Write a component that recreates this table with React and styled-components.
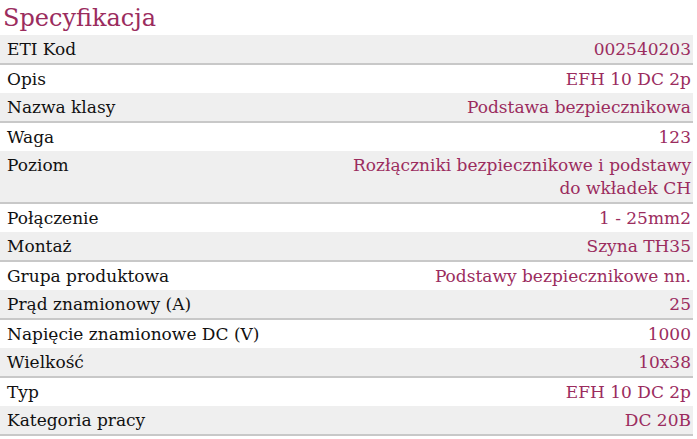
import React from 'react'
import styled, { createGlobalStyle } from 'styled-components'

const Global = createGlobalStyle`
  body {
    margin: 0;
    background: #ffffff;
    font-family: "DejaVu Serif", serif;
  }
`

const Wrap = styled.div`
  width: 693px;
`

const Title = styled.h2`
  margin: 0;
  padding: 3px 0 0 3px;
  height: 35px;
  box-sizing: border-box;
  font-family: "DejaVu Serif", serif;
  font-size: 24px;
  font-weight: normal;
  line-height: 30px;
  color: #9b2c5e;
`

const Table = styled.div`
  display: flex;
  flex-direction: column;
`

const Row = styled.div`
  display: flex;
  justify-content: space-between;
  align-items: flex-start;
  padding: 3px 2px 2px 7px;
  font-family: "DejaVu Serif", serif;
  font-size: 17px;
  line-height: 23px;
  background: ${(p) => (p.$odd ? '#efefef' : '#ffffff')};
  border-bottom: ${(p) => (p.$odd ? '2px solid #c8c8c8' : 'none')};
`

const Label = styled.span`
  font-family: "DejaVu Serif", serif;
  color: #111111;
`

const Value = styled.span`
  font-family: "DejaVu Serif", serif;
  color: #9b2c5e;
  text-align: right;
`

const dane = [
  ['ETI Kod', '002540203'],
  ['Opis', 'EFH 10 DC 2p'],
  ['Nazwa klasy', 'Podstawa bezpiecznikowa'],
  ['Waga', '123'],
  ['Poziom', ['Rozłączniki bezpiecznikowe i podstawy', 'do wkładek CH']],
  ['Połączenie', '1 - 25mm2'],
  ['Montaż', 'Szyna TH35'],
  ['Grupa produktowa', 'Podstawy bezpiecznikowe nn.'],
  ['Prąd znamionowy (A)', '25'],
  ['Napięcie znamionowe DC (V)', '1000'],
  ['Wielkość', '10x38'],
  ['Typ', 'EFH 10 DC 2p'],
  ['Kategoria pracy', 'DC 20B'],
]

export default function App() {
  return (
    <Wrap>
      <Global />
      <Title>Specyfikacja</Title>
      <Table>
        {dane.map(([nazwa, wartosc], i) => (
          <Row key={nazwa} $odd={i % 2 === 0}>
            <Label>{nazwa}</Label>
            <Value>
              {Array.isArray(wartosc)
                ? wartosc.map((l, j) => (
                    <React.Fragment key={j}>
                      {l}
                      {j < wartosc.length - 1 && <br />}
                    </React.Fragment>
                  ))
                : wartosc}
            </Value>
          </Row>
        ))}
      </Table>
    </Wrap>
  )
}
